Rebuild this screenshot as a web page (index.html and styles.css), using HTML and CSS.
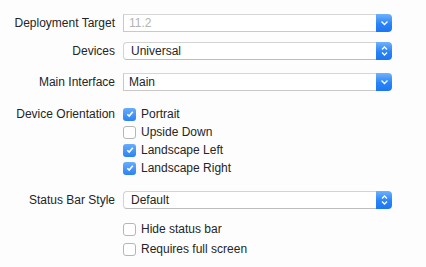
FILE: index.html
```html
<!DOCTYPE html>
<html>
<head>
    <meta charset="UTF-8">
    <title>Deployment Info</title>
    <link rel="stylesheet" href="styles.css">
</head>
<body>
    <div class="panel">
        <div class="row first">
            <div class="label">Deployment Target</div>
            <div class="combo">
                <div class="field muted">11.2</div>
                <div class="arrow"><svg width="9" height="6" viewBox="0 0 9 6"><path d="M1.5 1.5 L4.5 4.5 L7.5 1.5" fill="none" stroke="#fff" stroke-width="1.4"/></svg></div>
            </div>
        </div>

        <div class="row gap10">
            <div class="label">Devices</div>
            <div class="popup">
                <div class="field">Universal</div>
                <div class="arrow"><svg width="9" height="12" viewBox="0 0 9 12"><path d="M2 4.5 L4.5 2 L7 4.5 M2 7.5 L4.5 10 L7 7.5" fill="none" stroke="#fff" stroke-width="1.3"/></svg></div>
            </div>
        </div>

        <div class="row gap13">
            <div class="label">Main Interface</div>
            <div class="combo">
                <div class="field">Main</div>
                <div class="arrow"><svg width="9" height="6" viewBox="0 0 9 6"><path d="M1.5 1.5 L4.5 4.5 L7.5 1.5" fill="none" stroke="#fff" stroke-width="1.4"/></svg></div>
            </div>
        </div>

        <div class="row gap14 top">
            <div class="label">Device Orientation</div>
            <div class="checks">
                <div class="check"><span class="box on"><svg width="10" height="10" viewBox="0 0 10 10"><path d="M2.3 5.2 L4.2 7.1 L7.8 2.8" fill="none" stroke="#fff" stroke-width="1.6"/></svg></span>Portrait</div>
                <div class="check"><span class="box"></span>Upside Down</div>
                <div class="check"><span class="box on"><svg width="10" height="10" viewBox="0 0 10 10"><path d="M2.3 5.2 L4.2 7.1 L7.8 2.8" fill="none" stroke="#fff" stroke-width="1.6"/></svg></span>Landscape Left</div>
                <div class="check"><span class="box on"><svg width="10" height="10" viewBox="0 0 10 10"><path d="M2.3 5.2 L4.2 7.1 L7.8 2.8" fill="none" stroke="#fff" stroke-width="1.6"/></svg></span>Landscape Right</div>
            </div>
        </div>

        <div class="row gap14">
            <div class="label">Status Bar Style</div>
            <div class="popup">
                <div class="field">Default</div>
                <div class="arrow"><svg width="9" height="12" viewBox="0 0 9 12"><path d="M2 4.5 L4.5 2 L7 4.5 M2 7.5 L4.5 10 L7 7.5" fill="none" stroke="#fff" stroke-width="1.3"/></svg></div>
            </div>
        </div>

        <div class="row gap10 top">
            <div class="label"></div>
            <div class="checks wide">
                <div class="check"><span class="box"></span>Hide status bar</div>
                <div class="check"><span class="box"></span>Requires full screen</div>
            </div>
        </div>
    </div>
</body>
</html>
```

FILE: styles.css
```css
body {
    margin: 0;
    background: #fdfdfd;
    font-family: "Liberation Sans", Arial, sans-serif;
    font-size: 12px;
    color: #252525;
}
.panel {
    width: 426px;
    padding-top: 14px;
}
.row {
    display: flex;
    align-items: center;
}
.row.top {
    align-items: flex-start;
}
.gap10 { margin-top: 10px; }
.gap13 { margin-top: 13px; }
.gap14 { margin-top: 14px; }
.label {
    width: 115px;
    text-align: right;
    padding-right: 8px;
    line-height: 18px;
    flex-shrink: 0;
}
.combo, .popup {
    display: flex;
    width: 269px;
    height: 18px;
}
.field {
    flex: 1;
    box-sizing: border-box;
    height: 18px;
    line-height: 17px;
    padding-left: 5px;
    background: #fff;
    border: 1px solid #c9c9c9;
    border-right: none;
    border-top-color: #d6d6d6;
}
.popup .field {
    padding-left: 7px;
    border-radius: 4px 0 0 4px;
    border-color: #d3d3d3;
    border-bottom-color: #bdbdbd;
}
.muted {
    color: #b3b3b3;
}
.arrow {
    width: 16px;
    height: 18px;
    display: flex;
    align-items: center;
    justify-content: center;
    background: linear-gradient(#6fb2fb, #2a83f6 55%, #1c76f2);
    border-radius: 0 4px 4px 0;
}
.checks {
    display: flex;
    flex-direction: column;
}
.check {
    display: flex;
    align-items: center;
    height: 18px;
}
.wide .check {
    height: 20px;
}
.box {
    box-sizing: border-box;
    width: 13px;
    height: 13px;
    margin-right: 5px;
    border: 1px solid #b6b6b6;
    border-radius: 3px;
    background: #fff;
    display: flex;
    align-items: center;
    justify-content: center;
}
.box.on {
    border: none;
    background: linear-gradient(#67adfa, #2b82f5);
}
```
